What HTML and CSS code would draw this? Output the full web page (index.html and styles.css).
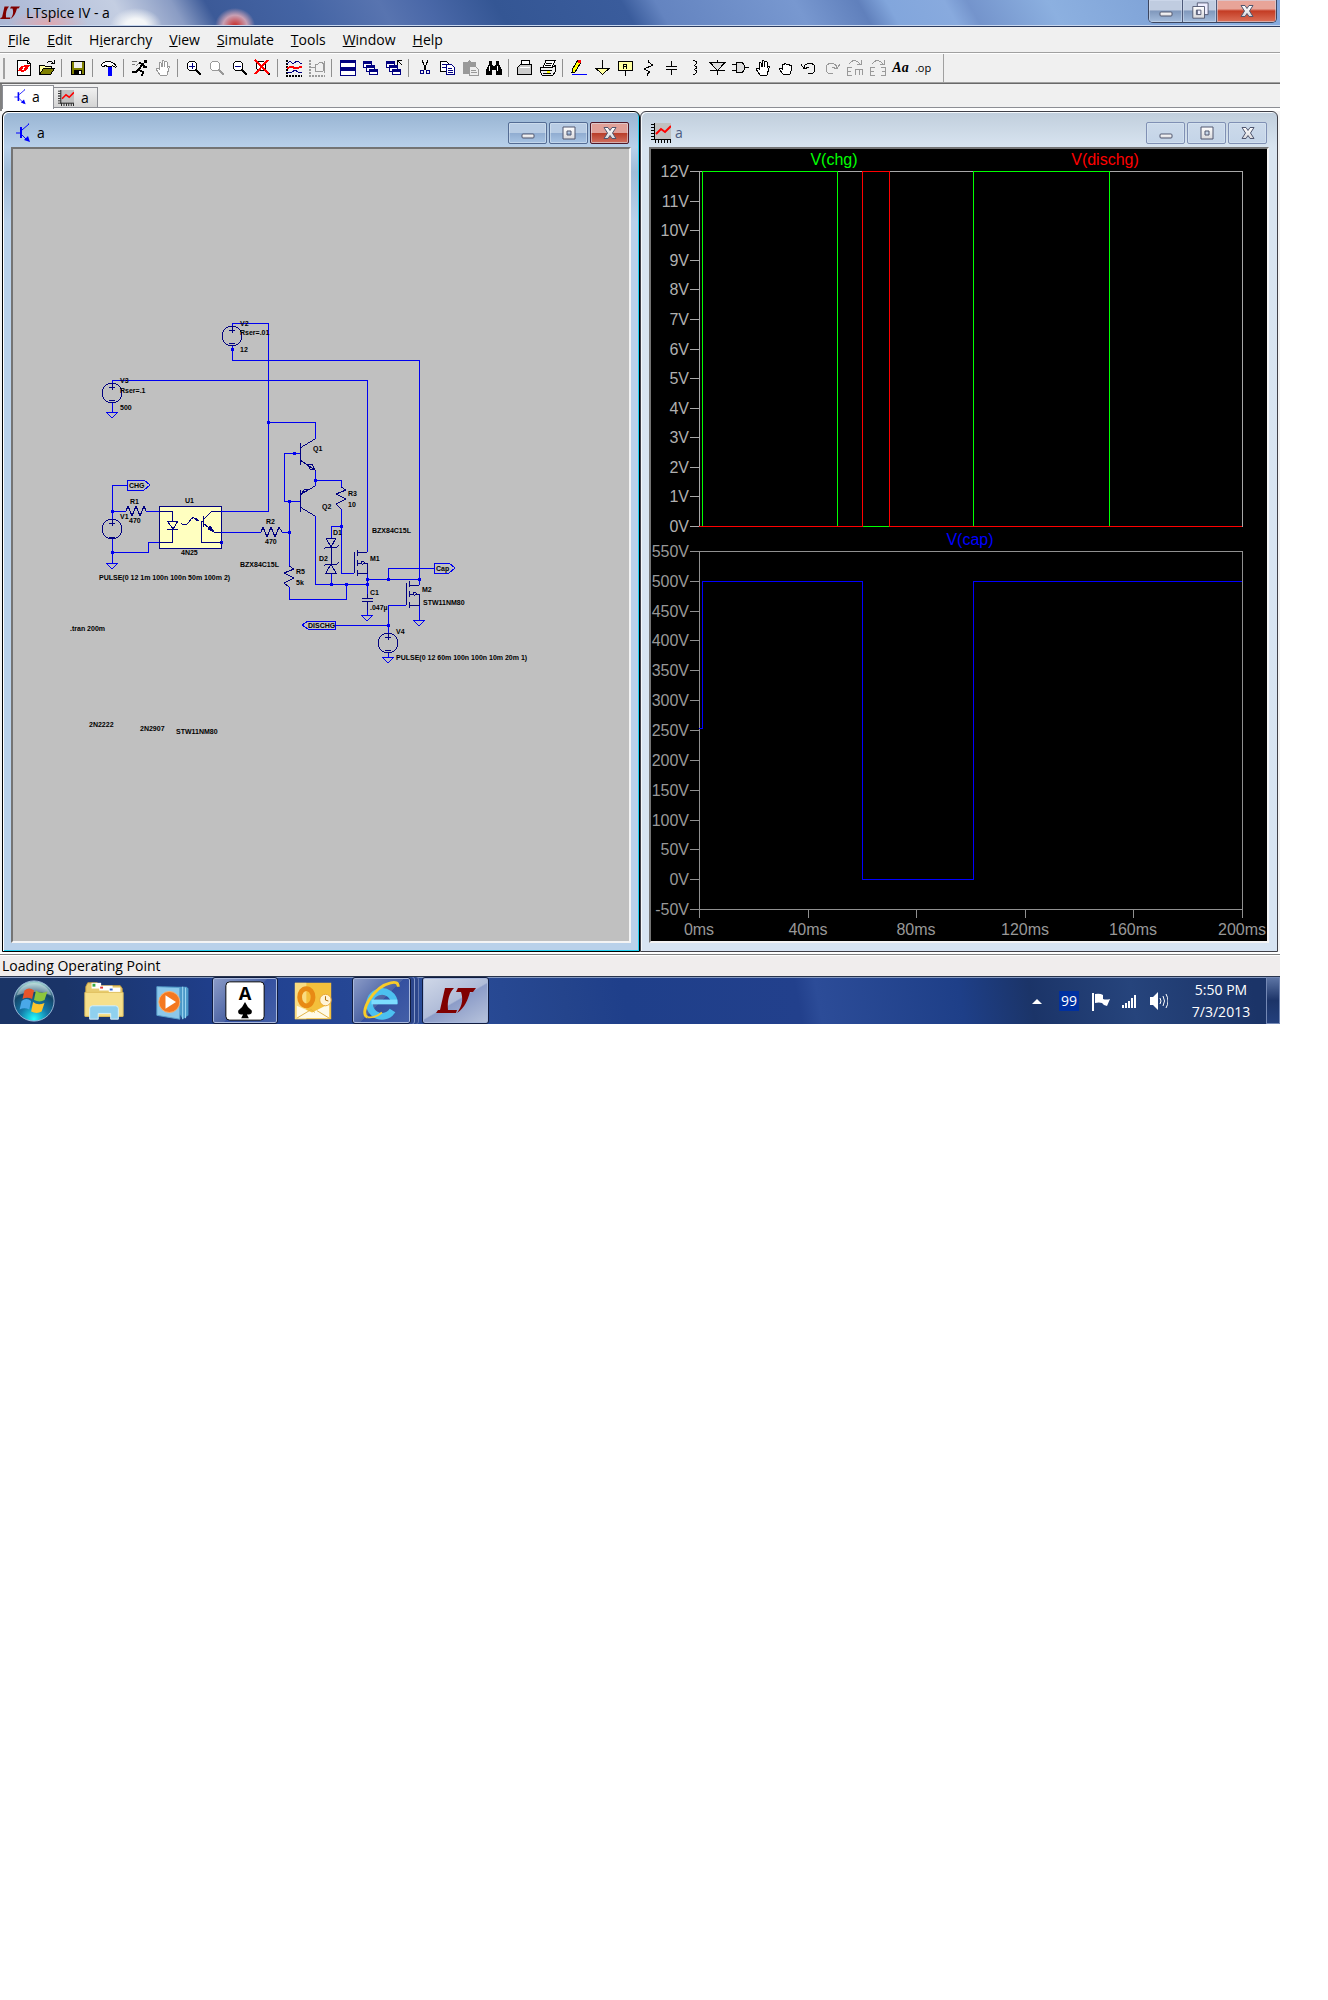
FILE: index.html
```html
<!DOCTYPE html>
<html lang="en">
<head>
<meta charset="utf-8">
<title>LTspice IV - a</title>
<link rel="stylesheet" href="styles.css">
</head>
<body>
<svg class="defs" aria-hidden="true">
  <defs>
    <linearGradient id="glyph" x1="0" y1="0" x2="0" y2="1"><stop offset="0" stop-color="#fff"/><stop offset="1" stop-color="#d8d8dc"/></linearGradient>
    <symbol id="i-min" viewBox="0 0 20 16"><rect x="4" y="9" width="12" height="4" rx="1" fill="url(#glyph)" stroke="#50566e"/></symbol>
    <symbol id="i-max" viewBox="0 0 20 16"><path d="M4 2h12v12h-12zM8 6v4h4v-4z" fill="url(#glyph)" stroke="#50566e" fill-rule="evenodd"/></symbol>
    <symbol id="i-close" viewBox="0 0 20 16"><path d="M4 2.500h4l2 3 2-3h4l-3.500 5.500 3.500 5.500h-4l-2-3-2 3h-4l3.500-5.500z" fill="url(#glyph)" stroke="#50566e"/></symbol>
    <symbol id="i-npn" viewBox="0 0 16 20"><path d="M1 10h5M13 1h1l-7 6M7 12l6 6" stroke="#00f" fill="none"/><path d="M6 4v11" stroke="#00f" stroke-width="2"/><path d="M9 17l4-4 2 6z" fill="#00f"/></symbol>
    <symbol id="i-plot" viewBox="0 0 20 20"><path fill="#c0c0c0" d="M3 0h17v17h-17z"/><path d="M3.500 0v17M3 16.500h17" stroke="#000"/><path d="M1.500 1v16M4 18.500h16" stroke="#000" stroke-width="3" stroke-dasharray="1 2"/><path d="M5 11l5-5 4 3 6-6" fill="none" stroke="#f00" stroke-width="2"/></symbol>
    <symbol id="i-lt" viewBox="0 0 40 28"><path d="M9 1h9C13 6 11 14 12 23h9l-1 3H0l2-3h2zM22 1h18l-3 4h-3C32 12 29 21 21 26c6-8 6-15 4-21h-5z" fill="#800000"/></symbol>
    <symbol id="i-glass" viewBox="0 0 18 18"><circle cx="7" cy="7" r="5" fill="#fff" stroke="currentColor"/><path d="M11 11l5 5" stroke="currentColor" stroke-width="2"/></symbol>
    <symbol id="i-windows" viewBox="0 0 18 18"><g fill="#fff" stroke="#000080"><path d="M1.500 2.500h8v6h-8zM4.500 6.500h8v6h-8zM7.500 10.500h8v5h-8z"/></g><path d="M1 3.500h9M4 7.500h9M7 11.500h9" stroke="#000080" stroke-width="2"/></symbol>
    <symbol id="i-hand" viewBox="0 0 18 18"><path d="M6 16l-4-6q0-2 3 0V4q1-2 2 0l1 4V2q1-1 2 0v6l1-5q1-1 2 0v6l1-2q2 0 1 2l-2 7z" fill="#fff" stroke="currentColor"/></symbol>
    <symbol id="i-turn" viewBox="0 0 18 18"><path d="M4 9c1-7 12-6 11 1 0 4-4 5-7 5M1 5l3 5 5-2" fill="none" stroke="currentColor" stroke-width="1"/></symbol>
  </defs>
</svg>

<div class="screen">
  <header class="titlebar">
    <svg class="app-icon" viewBox="0 0 40 28"><use href="#i-lt"/></svg>
    <h1>LTspice IV - a</h1>
    <div class="app-controls">
      <button class="ctl" aria-label="Minimize"><svg><use href="#i-min"/></svg></button>
      <button class="ctl" aria-label="Restore"><svg viewBox="0 0 20 20"><path d="M7 1h12v13h-12z" fill="#eef" stroke="#50566e"/><path d="M2 5h13v13h-13zM6 9v5h5v-5z" fill="url(#glyph)" fill-rule="evenodd" stroke="#50566e"/></svg></button>
      <button class="ctl ctl-close" aria-label="Close"><svg><use href="#i-close"/></svg></button>
    </div>
  </header>

  <nav class="menu">
    <a href="#"><u>F</u>ile</a><a href="#"><u>E</u>dit</a><a href="#">H<u>i</u>erarchy</a><a href="#"><u>V</u>iew</a><a href="#"><u>S</u>imulate</a><a href="#"><u>T</u>ools</a><a href="#"><u>W</u>indow</a><a href="#"><u>H</u>elp</a>
  </nav>

  <div class="toolbar">
    <button aria-label="New"><svg viewBox="0 0 18 18"><path d="M2.500 1.500h10l3 3v12h-13z" fill="#fff" stroke="#000"/><path d="M12.500 1.500v3h3" fill="none" stroke="#000"/><path d="M3 12l3-5h3l-2 4h2l-1 2zM8 13l2-5H8l1-2h6l-3 5z" fill="#f00"/></svg></button>
    <button aria-label="Open"><svg viewBox="0 0 18 18"><path d="M1.500 15.500v-9h5l1 1h6v3" fill="#ffffa0" stroke="#000"/><path d="M1.500 15.500l4-6h11l-4 6z" fill="#808000" stroke="#000"/><path d="M9 4q3-4 6 0m1-3v3h-3" fill="none" stroke="#000"/></svg></button>
    <i></i>
    <button aria-label="Save"><svg viewBox="0 0 18 18"><path d="M2.500 2.500h13v13h-13z" fill="#808000" stroke="#000"/><path d="M5 3h8v6H5z" fill="#efefef"/><path d="M5 11h8v5H5z"/><path d="M10 12h2v3h-2z" fill="#fff"/></svg></button>
    <i></i>
    <button aria-label="Control Panel"><svg viewBox="0 0 18 18"><path d="M1.500 6.500q1-4 6-4 6 0 9 5l-1 1-3-2-1 1H7l-1-1-3 1z" fill="#fff" stroke="#000"/><path d="M8 8h4v9H8z" fill="#00f"/></svg></button>
    <i></i>
    <button aria-label="Run"><svg viewBox="0 0 18 18"><path d="M13 1h3v3h-3z"/><path d="M8 4l4 1 1 3h3M11 5l-3 6 4 2-1 4M8 10l-3 3H1" fill="none" stroke="#000" stroke-width="2"/><path d="M8 4L5 7M1 2l5 1M1 5h3" fill="none" stroke="#777"/></svg></button>
    <button class="off" aria-label="Halt"><svg><use href="#i-hand"/></svg></button>
    <i></i>
    <button aria-label="Zoom in"><svg viewBox="0 0 18 18"><use href="#i-glass"/><path d="M4 7h6M7 4v6" stroke="#000080" stroke-width="1"/></svg></button>
    <button class="off" aria-label="Pan"><svg><use href="#i-glass"/></svg></button>
    <button aria-label="Zoom out"><svg viewBox="0 0 18 18"><use href="#i-glass"/><path d="M4 7h6" stroke="#000080"/></svg></button>
    <button aria-label="Zoom full"><svg viewBox="0 0 18 18"><use href="#i-glass"/><path d="M1 1l14 14M14 1L1 15" stroke="#f00" stroke-width="2"/></svg></button>
    <i></i>
    <button aria-label="Autorange"><svg viewBox="0 0 18 18"><path d="M1.500 1v16M1 16.500h16" stroke="#000" stroke-dasharray="2 1" stroke-width="2"/><path d="M2 5l3-3 3 3 4-3 5 3M2 13h5l3-2 3 2h4" fill="none" stroke="#000080"/><path d="M2 9l4-1 5 1 6-1" fill="none" stroke="#f00" stroke-width="2"/></svg></button>
    <button class="off" aria-label="Plot settings"><svg viewBox="0 0 18 18"><path d="M1.500 1v16M1 16.500h16" stroke="#999" stroke-dasharray="2 1" stroke-width="2"/><path d="M3 8h4M7 5h3q5-5 6 3 0 7-6 4H7zM16.500 2v12" fill="none" stroke="#999"/></svg></button>
    <i></i>
    <button aria-label="Tile"><svg viewBox="0 0 18 18"><path d="M1.500 1.500h15v7h-15zM1.500 9.500h15v7h-15z" fill="#fff" stroke="#000080"/><path d="M1 3h16M1 11h16" stroke="#000080" stroke-width="2"/></svg></button>
    <button aria-label="Cascade"><svg><use href="#i-windows"/></svg></button>
    <button aria-label="Close all"><svg viewBox="0 0 18 18"><use href="#i-windows"/><path d="M12 1.500h5M12.500 1v5M12 1l5 5" stroke="#000"/></svg></button>
    <i></i>
    <button aria-label="Cut"><svg viewBox="0 0 18 18"><path d="M6 1l4 10M12 1L8 11" stroke="#000"/><circle cx="6" cy="13" r="2" fill="none" stroke="#000080"/><circle cx="12" cy="13" r="2" fill="none" stroke="#000080"/></svg></button>
    <button aria-label="Copy"><svg viewBox="0 0 18 18"><path d="M1.500 2.500h6l3 3v7h-9z" fill="#fff" stroke="#000"/><path d="M7.500 5.500h5l3 3v7h-8z" fill="#fff" stroke="#000080"/><path d="M3 5.500h4M3 8.500h4M9 9.500h4M9 11.500h5M9 13.500h5" stroke="#000080"/></svg></button>
    <button class="off" aria-label="Paste"><svg viewBox="0 0 18 18"><path d="M1 3h4l2-2 3 2h4v12H1z" fill="#999"/><path d="M7.500 7.500h6l3 3v6h-9z" fill="#eee" stroke="#999"/><path d="M9 11.500h5M9 13.500h6" stroke="#999"/></svg></button>
    <button aria-label="Find"><svg viewBox="0 0 18 18"><path d="M4 2h3v3l2 3 2-3V2h3v3l3 6v5h-6v-5H7v5H1v-5l3-6z"/><path d="M4 7v5M12 7v5" stroke="#fff"/></svg></button>
    <i></i>
    <button aria-label="Page setup"><svg viewBox="0 0 18 18"><path d="M5 6l1-4.500h7l1 4.500" fill="#fff" stroke="#000"/><path d="M1.500 15.500v-7l3-3h11v10z" fill="#ccc" stroke="#000"/><path d="M4 8h10" stroke="#fff"/></svg></button>
    <button aria-label="Print"><svg viewBox="0 0 18 18"><path d="M4 8l3-6.500h9l-3 7" fill="#fff" stroke="#000"/><path d="M7 4.500h6M6 6.500h6" stroke="#000"/><path d="M1.500 13.500v-5h11l4-2v6l-3 4h-10z" fill="#eee" stroke="#000"/><path d="M2 11.500h11M4 14.500h8" stroke="#000"/><path d="M8 12h3v2H8z" fill="#ff0"/></svg></button>
    <i></i>
    <button aria-label="Wire"><svg viewBox="0 0 18 18"><path d="M2 13l1-4 5-8h3l-1 4-5 8z" fill="#ff0" stroke="#000"/><path d="M8 1h3v3H8z" fill="#f00"/><path d="M2 15.500h15" stroke="#00f"/></svg></button>
    <button aria-label="Ground"><svg viewBox="0 0 18 18"><path d="M9.500 1v8" stroke="#000"/><path d="M3 9.500h13l-6.500 6z" fill="#ffffa0" stroke="#000"/></svg></button>
    <button aria-label="Label net"><svg viewBox="0 0 18 18"><path d="M2.500 2.500h14v9h-14zM9.500 12v5" fill="#ffffa0" stroke="#000"/><path d="M7.500 10V5.500h3V10M8 7.500h3" fill="none" stroke="#000"/></svg></button>
    <button aria-label="Resistor"><svg viewBox="0 0 18 18"><path d="M9 1v2l5 3-9 4 6 3-3 2v2" fill="none" stroke="#000"/></svg></button>
    <button aria-label="Capacitor"><svg viewBox="0 0 18 18"><path d="M9.500 2v5M4 7.500h11M4 10.500h11M9.500 11v5" stroke="#000"/></svg></button>
    <button aria-label="Inductor"><svg viewBox="0 0 18 18"><path d="M7.500 1.500h2q4 2 0 5h-1 1q4 2 0 4h-1 1q4 2 0 5h-2" fill="none" stroke="#000"/></svg></button>
    <button aria-label="Diode"><svg viewBox="0 0 18 18"><path d="M9.500 1v15M2 11.500h15" stroke="#000"/><path d="M2 3.500h15l-7.500 8z" fill="#ddd" stroke="#000"/></svg></button>
    <button aria-label="Component"><svg viewBox="0 0 18 18"><path d="M1 5.500h4M1 11.500h4M14 8.500h4" stroke="#000"/><path d="M5.500 3.500h4q4 0 4 5t-4 5h-4z" fill="#ddd" stroke="#000"/></svg></button>
    <button aria-label="Move"><svg><use href="#i-hand"/></svg></button>
    <button aria-label="Drag"><svg viewBox="0 0 18 18"><path d="M6 15l-4-5q0-2 3 0V6q1-2 2 0 1-3 3 0 2-2 3 1 2-1 2 2l-2 6z" fill="#fff" stroke="#000"/></svg></button>
    <button aria-label="Undo"><svg><use href="#i-turn"/></svg></button>
    <button class="off" aria-label="Redo"><svg viewBox="0 0 18 18"><path d="M14 9C13 2 2 3 3 10c0 4 4 5 7 5M17 5l-3 5-5-2" fill="none" stroke="#999"/></svg></button>
    <button class="off" aria-label="Rotate"><svg viewBox="0 0 18 18"><path d="M6 8.500H1.500v8H6M2 12.500h3M9.500 16v-5.500h7V16M13 11v5M3 5q5-7 11 0m1-4v4h-4" fill="none" stroke="#999"/></svg></button>
    <button class="off" aria-label="Mirror"><svg viewBox="0 0 18 18"><path d="M6 8.500H1.500v8H6M2 12.500h3M12 8.500h4.500v8H12M16 12.500h-3M3 5q5-7 11 0m1-4v4h-4" fill="none" stroke="#999"/></svg></button>
    <button class="tool-text">Aa</button>
    <button class="tool-op">.op</button>
  </div>

  <div class="tabs">
    <button class="tab tab-on"><svg><use href="#i-npn"/></svg>a</button>
    <button class="tab"><svg><use href="#i-plot"/></svg>a</button>
  </div>

  <main class="mdi">
    <section class="win win-active">
      <header class="win-title">
        <svg><use href="#i-npn"/></svg><h2>a</h2>
        <div class="win-controls">
          <button class="ctl" aria-label="Minimize"><svg><use href="#i-min"/></svg></button>
          <button class="ctl" aria-label="Maximize"><svg><use href="#i-max"/></svg></button>
          <button class="ctl ctl-close" aria-label="Close"><svg><use href="#i-close"/></svg></button>
        </div>
      </header>
      <svg class="canvas schematic" viewBox="13 149 616 792">
        <path class="chip" d="M159 506h62v42h-62z"/>
        <g class="wire">
          <path d="M232 326v-3h36v188h-47M232 346v14h187v219M112 383v-3h255v172M112 403v9M268 422h47v17M284 453h10M294 453h-10v48h16M315 470v10h26v7M289 501v65M221 532h40M282 532h7M112 519v-34h15M112 511h14M146 511h13M112 539v24M112 552h36v-10h11M315 516v68h52M341 509v64h13M341 526h-10v12M331 573v11M289 587v12h57v-15M367 573v21M367 579h52v6M388 579v-11h46M388 633v-28h18M335 625h53M367 610v5M419 606v14M388 653v4M315 480v6M294 453h6"/>
          <path d="M106 412h12l-6 6zM106 563h12l-6 6zM361 615h12l-6 6zM413 620h12l-6 6zM382 657h12l-6 6z"/>
          <path d="M127 480h17l6 5-6 5h-17zM434 563h15l6 5-6 5h-15zM335 621h-27l-6 4 6 4h27z"/>
          <path d="M220 541h2v2h-2z"/>
        </g>
        <g class="dot"><path d="M231 348h3v3h-3zM267 421h3v3h-3zM293 452h3v3h-3zM314 479h3v3h-3zM288 500h3v3h-3zM288 531h3v3h-3zM340 525h3v3h-3zM330 583h3v3h-3zM345 583h3v3h-3zM366 583h3v3h-3zM366 578h3v3h-3zM387 578h3v3h-3zM418 578h3v3h-3zM387 624h3v3h-3zM111 510h3v3h-3zM111 551h3v3h-3z"/></g>
        <g class="part">
          <circle cx="232" cy="336" r="10"/><circle cx="112" cy="393" r="10"/><circle cx="112" cy="529" r="10"/><circle cx="388" cy="643" r="10"/>
          <path d="M229 330h6M232 327v6M229 343h6M109 387h6M112 384v6M109 400h6M109 523h6M112 520v6M109 537h6M385 637h6M388 634v6M385 650h6"/>
          <path d="M126 511l2-5 4 10 4-10 4 10 4-10 2 5M261 532l2-5 4 10 4-10 4 10 4-10 3 5"/>
          <path d="M341 487l5 3-10 4 10 5-10 5 5 5M289 566l5 3-10 4 10 5-10 5 5 4"/>
          <path d="M300 443v22M300 448l15-9M300 460l15 10M307 464l5 0 3 6-5-1zM300 490v22M315 486l-15 9M301 494l4-5 3 1zM300 507l15 9"/>
          <path d="M159 511h13v10M167 521h11l-5 8zM167 529h11M172 529v13h-13M181 523c2 3 6 2 8-1s4-6 6-3 3 1 4 1M195 518l4 3"/>
          <path d="M203 516v11M203 520l9-9h9M203 523l11 9h7M208 529l2-3 4 6zM203 521h-2v21h20"/>
          <path d="M326 538h10l-5 9zM324 549l2-2h11l2-2M331 547v17M324 566l2-2h11l2-2M331 564l5 9h-10z"/>
          <path d="M354 552v21M357 550v6M357 560v6M357 570v6M357 552h10M357 563h4q1-3 4 0-3 2-4 0M365 563h2v10h-10M406 583v22M409 581v6M409 591v6M409 602v6M409 585h10M409 594h4q1-3 4 0-3 2-4 0M417 594h2v12M419 605h-10"/>
          <path d="M367 594v4M362 598h11M362 601h11M367 601v9"/>
        </g>
        <g class="note">
          <text x="240" y="326">V2</text><text x="240" y="335">Rser=.01</text><text x="240" y="352">12</text>
          <text x="120" y="383">V3</text><text x="120" y="393">Rser=.1</text><text x="120" y="410">500</text>
          <text x="313" y="451">Q1</text><text x="322" y="509">Q2</text><text x="348" y="496">R3</text><text x="348" y="507">10</text>
          <text x="129" y="488">CHG</text><text x="130" y="504">R1</text><text x="129" y="523">470</text><text x="120" y="519">V1</text>
          <text x="185" y="503">U1</text><text x="181" y="555">4N25</text><text x="266" y="524">R2</text><text x="265" y="544">470</text>
          <text x="240" y="567">BZX84C15L</text><text x="296" y="574">R5</text><text x="296" y="585">5k</text>
          <text x="333" y="535">D1</text><text x="319" y="561">D2</text><text x="372" y="533">BZX84C15L</text><text x="370" y="561">M1</text>
          <text x="436" y="571">Cap</text><text x="422" y="592">M2</text><text x="423" y="605">STW11NM80</text>
          <text x="370" y="595">C1</text><text x="370" y="610">.047µ</text><text x="308" y="628">DISCHG</text><text x="396" y="634">V4</text>
          <text x="396" y="660">PULSE(0 12 60m 100n 100n 10m 20m 1)</text>
          <text x="99" y="580">PULSE(0 12 1m 100n 100n 50m 100m 2)</text>
          <text x="70" y="631">.tran 200m</text><text x="89" y="727">2N2222</text><text x="140" y="731">2N2907</text><text x="176" y="734">STW11NM80</text>
        </g>
      </svg>
    </section>

    <section class="win">
      <header class="win-title">
        <svg><use href="#i-plot"/></svg><h2>a</h2>
        <div class="win-controls">
          <button class="ctl" aria-label="Minimize"><svg><use href="#i-min"/></svg></button>
          <button class="ctl" aria-label="Maximize"><svg><use href="#i-max"/></svg></button>
          <button class="ctl" aria-label="Close"><svg><use href="#i-close"/></svg></button>
        </div>
      </header>
      <svg class="canvas plot" viewBox="651 149 616 792">
        <g class="axis axis-a">
          <path d="M699 171h543v355h-543zM690 171h9M690 201h9M690 230h9M690 260h9M690 289h9M690 319h9M690 349h9M690 378h9M690 408h9M690 437h9M690 467h9M690 496h9M690 526h9"/>
          <g class="ylab"><text x="689" y="177">12V</text><text x="689" y="207">11V</text><text x="689" y="236">10V</text><text x="689" y="266">9V</text><text x="689" y="295">8V</text><text x="689" y="325">7V</text><text x="689" y="355">6V</text><text x="689" y="384">5V</text><text x="689" y="414">4V</text><text x="689" y="443">3V</text><text x="689" y="473">2V</text><text x="689" y="502">1V</text><text x="689" y="532">0V</text></g>
        </g>
        <g class="axis axis-b">
          <path d="M699 551h543v358h-543zM690 551h9M690 581h9M690 611h9M690 640h9M690 670h9M690 700h9M690 730h9M690 760h9M690 790h9M690 820h9M690 849h9M690 879h9M690 909h9M699 909v9M808 909v9M916 909v9M1025 909v9M1133 909v9M1242 909v9"/>
          <g class="ylab"><text x="689" y="557">550V</text><text x="689" y="587">500V</text><text x="689" y="617">450V</text><text x="689" y="646">400V</text><text x="689" y="676">350V</text><text x="689" y="706">300V</text><text x="689" y="736">250V</text><text x="689" y="766">200V</text><text x="689" y="796">150V</text><text x="689" y="826">100V</text><text x="689" y="855">50V</text><text x="689" y="885">0V</text><text x="689" y="915">-50V</text></g>
          <g class="xlab"><text x="699" y="935">0ms</text><text x="808" y="935">40ms</text><text x="916" y="935">80ms</text><text x="1025" y="935">120ms</text><text x="1133" y="935">160ms</text><text x="1242" y="935">200ms</text></g>
        </g>
        <path class="trace chg" d="M699 526h3v-355h135v355h136v-355h136v355h133"/>
        <path class="trace dischg" d="M699 526h163v-355h27v355h353"/>
        <path class="trace chg" d="M863 526h26"/>
        <path class="trace cap" d="M699 728h3v-147h160v298h111v-298h269"/>
        <g class="xlab"><text class="t-chg" x="834" y="165">V(chg)</text><text class="t-dischg" x="1105" y="165">V(dischg)</text><text class="t-cap" x="970" y="545">V(cap)</text></g>
      </svg>
    </section>
  </main>

  <footer class="status">Loading Operating Point</footer>

  <div class="taskbar">
    <button class="task start" aria-label="Start"><svg viewBox="0 0 46 46">
      <defs><radialGradient id="orb" cx=".5" cy=".95" r=".9"><stop offset="0" stop-color="#2ff"/><stop offset=".4" stop-color="#1478a8"/><stop offset=".75" stop-color="#134468"/><stop offset="1" stop-color="#9cc"/></radialGradient></defs>
      <circle cx="23" cy="23" r="21" fill="url(#orb)" stroke="#9ab8d8"/><path d="M5 17a19 19 0 0 1 36 0q-17-7-36 0z" fill="#fff" opacity=".35"/>
      <path d="M13 12q5-4 10 0l-2 9q-5-3-10 0z" fill="#e8542a"/><path d="M25 12q5 4 12 1l-3 9q-5 3-11 0z" fill="#8cc63c"/><path d="M10 23q5-4 10 0l-2 9q-5-3-10 0z" fill="#4aa8e8"/><path d="M22 24q5 4 12 1l-3 9q-5 3-11 0z" fill="#fcc42c"/></svg></button>
    <button class="task plain" aria-label="Explorer"><svg viewBox="0 0 46 46"><path d="M4 8l2-4h10l2 3h22l2 3v29H4z" fill="#e8cc70" stroke="#c8a040"/><path d="M10 4h10v6H10z" fill="#fff"/><path d="M11 5h3v3h-3z" fill="#3a4"/><path d="M18 7h14v5H18z" fill="#fff"/><path d="M19 8h3v2h-3z" fill="#d33"/><path d="M28 9h12v5H28z" fill="#fff"/><path d="M29 10h3v2h-3z" fill="#36c"/><path d="M3 14h40v25H3z" fill="#f6e08c" stroke="#e0c060"/><path d="M8 42V31q0-3 3-3h24q3 0 3 3v11h-8v-6H17v6z" fill="#8fd0ee" stroke="#d8f0fa"/></svg></button>
    <button class="task plain" aria-label="Media Player"><svg viewBox="0 0 46 46"><path d="M10 8h24l2 2v28l-6 4z" fill="#4a98c8"/><path d="M33 9v32M30 8v34" stroke="#a8dcf4"/><path d="M3 8l24 1v33L3 38z" fill="#8cc8ea" stroke="#58a0cc"/><circle cx="16" cy="24" r="11" fill="#f47820" stroke="#f8b070"/><path d="M12 17l11 7-11 7z" fill="#fff"/></svg></button>
    <button class="task lit" aria-label="Solitaire"><svg viewBox="0 0 46 46"><rect x="3" y="3" width="40" height="40" rx="4" fill="#fff" stroke="#000" stroke-width="1"/><text class="ace" x="23" y="22">A</text><path d="M23 24q2 5 7 9 1 5-5 4l2 4h-8l2-4q-6 1-5-4 5-4 7-9z"/></svg></button>
    <button class="task plain" aria-label="Outlook"><svg viewBox="0 0 46 46"><path d="M3 4h38v38H3z" fill="#f4c03c"/><path d="M3 4h12v38H3z" fill="#fadc80"/><path d="M5 41V28l16 7 18-9v15z" fill="#fffbe8"/><path d="M5 41l15-9 4 3M39 41l-13-8" stroke="#e0b040" fill="none"/><ellipse cx="15" cy="19" rx="7" ry="9" fill="none" stroke="#e88a14" stroke-width="5"/><circle cx="35" cy="22" r="6" fill="#fff4d8" stroke="#e8a838"/><path d="M35 18v4l3 1" stroke="#a60" fill="none"/></svg></button>
    <button class="task lit stack" aria-label="Internet Explorer"><svg viewBox="0 0 46 46"><path d="M36 26a13 13 0 1 0-2 7" fill="none" stroke="#4cc0f0" stroke-width="7"/><path d="M12 24h27" stroke="#7cdcff" stroke-width="5"/><path d="M8 40C-2 36 14 8 32 4q8-2 8 4" fill="none" stroke="#f8cc28" stroke-width="3"/><path d="M8 40q8 1 15-5" fill="none" stroke="#f8cc28" stroke-width="2"/></svg></button>
    <button class="task bright" aria-label="LTspice"><svg viewBox="0 0 40 28"><use href="#i-lt"/></svg></button>
    <div class="tray">
      <svg viewBox="0 0 18 24"><path d="M4 15l5-5 5 5z" fill="#fff"/></svg>
      <span class="temp">99</span>
      <svg viewBox="0 0 20 24"><path d="M3 4v18" stroke="#fff" stroke-width="2"/><path d="M5 5q5-1 8 1v4q3 1 7 0l-3 7q-3 0-5-3-3-1-7 0z" fill="#fff"/></svg>
      <svg viewBox="0 0 20 24"><path d="M4 19v-3M7 19v-5M10 19v-7M13 19V9M16 19V6" stroke="#fff" stroke-width="2"/></svg>
      <svg viewBox="0 0 20 24"><path d="M2 8h3l5-5v18l-5-5H2z" fill="#fff"/><path d="M12 9q2 3 0 6M15 7q3 5 0 10M18 5q4 7 0 14" fill="none" stroke="#fff"/></svg>
      <div class="clock"><div>5:50 PM</div><div>7/3/2013</div></div>
      <button class="peek" aria-label="Show desktop"></button>
    </div>
  </div>
</div>
</body>
</html>
```
FILE: styles.css
```css
* { box-sizing: border-box; }
body { margin: 0; background: #fff; color: #000; font: 14px/20px "Open Sans", "Noto Sans", sans-serif; }
button { margin: 0; padding: 0; border: 0; background: none; font: inherit; color: inherit; }
h1, h2 { margin: 0; font-size: 14px; font-weight: 400; }
.defs { position: absolute; width: 0; height: 0; }
.screen { width: 100%; max-width: 1280px; background: #f0f0f0; }

.titlebar {
  display: flex; align-items: flex-start; height: 27px; padding-right: 3px; overflow: hidden;
  border-bottom: 1px solid #2c3c60;
  background:
    linear-gradient(to bottom, transparent 25px, #c8d8f0 25px),
    radial-gradient(ellipse 26px 18px at 136px 26px, #f4f6f8 40%, transparent),
    radial-gradient(ellipse 20px 18px at 235px 26px, #c83c3c 10%, #c8a0b4 60%, transparent),
    radial-gradient(ellipse 40px 14px at 48px 24px, #e0a8b0, transparent),
    linear-gradient(60deg, #aab6d4 0, #c4cee2 110px, #8a9cc4 160px, #3c5a98 190px, #4464a4 270px, #5874b0 340px, #4a68a8 380px, #345694 440px, #3a5c9c 550px, #6484c0 580px, #7898d0 700px, #6080bc 755px, #82a6dc 780px, #88aade 830px, #7494cc 850px, #8cb0e0 920px, #80a4d8 1010px, #90b4e4 1060px, #84a8dc 100%);
}
.app-icon { width: 20px; height: 14px; margin-top: 6px; }
.titlebar h1 { margin: 3px auto 0 6px; }
.app-controls { display: flex; height: 23px; border: 1px solid #3c4660; border-top: 0; border-radius: 0 0 5px 5px; overflow: hidden; }
.ctl { display: flex; align-items: center; justify-content: center; }
.ctl svg { width: 20px; height: 16px; }
.app-controls .ctl { width: 34px; border-right: 1px solid #4c5878; background: linear-gradient(#c0cce0 0 45%, #8098bc 50%, #a4bcdc); box-shadow: inset 0 0 0 1px #d4e0f088; }
.app-controls .ctl:nth-child(2) svg { height: 18px; }
.app-controls .ctl-close { width: 59px; border: 0; background: linear-gradient(#e8a498 0 40%, #c43c24 50%, #dc7058); }

.menu { display: flex; gap: 17px; height: 27px; padding: 3px 8px; border-bottom: 1px solid #fff; box-shadow: inset 0 -1px #a0a0a0; }
.menu a { color: #000; text-decoration: none; }

.toolbar { display: flex; align-items: center; height: 30px; padding: 0 0 2px 12px; border-bottom: 1px solid #696969; box-shadow: inset 0 -1px #a0a0a0; position: relative; }
.toolbar::before { content: ""; position: absolute; left: 3px; top: 4px; width: 2px; height: 21px; background: #a0a0a0; }
.toolbar button { display: flex; align-items: center; justify-content: center; flex: none; width: 23px; height: 22px; color: #000; }
.toolbar .off { color: #999; }
.toolbar svg { width: 18px; height: 18px; shape-rendering: crispEdges; }
.toolbar i { flex: none; width: 8px; height: 18px; background: linear-gradient(90deg, transparent 3px, #909090 3px 4px, transparent 4px); }
.toolbar .tool-text { font: italic bold 14px "Liberation Serif", serif; }
.toolbar .tool-op { width: 32px; padding-right: 9px; font-size: 11px; height: 28px; border-right: 1px solid #a0a0a0; }

.tabs { display: flex; align-items: flex-end; height: 27px; padding-right: 2px; border-left: 2px solid #808080; background: linear-gradient(#f0f0f0 23px, #8c8e94 23px 24px, #fff 24px); }
.tab { display: flex; align-items: center; gap: 7px; width: 44px; height: 21px; margin-bottom: 3px; padding-left: 4px; border: 1px solid #8c8e94; border-left: 0; background: linear-gradient(#f0f0f0, #d4d4d4); }
.tab svg { width: 16px; height: 16px; }
.tab-on { width: 52px; height: 24px; margin-bottom: 2px; padding: 0 0 2px 9px; border-left: 1px solid #8c8e94; border-bottom: 0; background: #fff; gap: 4px; }

.mdi { display: grid; grid-template-columns: 1fr 1fr; padding: 0 2px; background: #f4f4f4; }
.win { padding: 0 8px 8px; border: 1px solid #404048; border-radius: 6px 6px 0 0; background: linear-gradient(#c0cedc, #d8e4f0 35px, #d7e4f2); box-shadow: inset 1px 1px #f4f8fc; }
.win-active { border-color: #000; background: linear-gradient(#98b4d2, #b8d0ea 35px, #a0bcd8 60px, #b9d1ea 110px); box-shadow: inset 1px 1px #fff, inset -1px -1px #20d0f0; }
.win-title { display: flex; align-items: center; height: 35px; padding: 6px 0 0 2px; gap: 4px; }
.win-title > svg { width: 20px; height: 20px; }
.win:not(.win-active) .win-title h2 { color: #4c5c80; }
.win-controls { display: flex; gap: 2px; margin-left: auto; padding-right: 2px; }
.win-controls .ctl { width: 39px; height: 22px; border: 1px solid #8090b4; border-radius: 2px; background: linear-gradient(#ccdaea, #c4d4e8); box-shadow: inset 0 0 0 1px #dce8f488; }
.win-active .ctl { border-color: #546c94; background: linear-gradient(#b8cce4 0 48%, #90acd0 50%, #a8c4e4); }
.win-active .ctl-close { border-color: #501828; background: linear-gradient(#e0a098 0 48%, #b83c28 50%, #d07060); }
.canvas { display: block; width: 100%; height: auto; border: 2px solid; border-color: #747474 #f4f4f4 #f4f4f4 #747474; shape-rendering: crispEdges; }

.schematic { background: #c0c0c0; }
.chip { fill: #ffffc0; stroke: #000080; stroke-width: 1px; }
.wire { fill: none; stroke: #0000f0; }
.dot { fill: #0000f0; }
.part { fill: none; stroke: #000080; }
.note { font: bold 7px "Liberation Sans", Arial, sans-serif; fill: #000; }

.plot { background: #000; font: 16px "Liberation Sans", Arial, sans-serif; }
.axis path, .trace { fill: none; stroke-width: 1px; }
.axis-a path { stroke: #a8a8a8; }
.axis-a { fill: #b0b0b0; }
.axis-b path { stroke: #909090; }
.axis-b { fill: #989898; }
.ylab { text-anchor: end; }
.xlab { text-anchor: middle; }
.chg { stroke: #00ff00; }
.dischg { stroke: #ff0000; }
.cap { stroke: #0000ff; }
.t-chg { fill: #00ff00; }
.t-dischg { fill: #ff0000; }
.t-cap { fill: #0000ff; }

.status { height: 24px; padding: 4px 2px 0; background: linear-gradient(#fff 2px, #808080 2px 3px, #fff 3px 4px, #f0eded 4px); }

.taskbar {
  display: flex; align-items: stretch; height: 48px; border-top: 1px solid #28344c; box-shadow: inset 0 1px #8498c0;
  background: linear-gradient(80deg, #1a3466 0, #1a3468 70px, #204090 240px, #2a4c98 440px, #24448c 560px, #1f3f8a 620px, #22408c 790px, #2c4c98 810px, #1e3f88 950px, #1b3468 1020px, #26447c 1120px, #1b3468 1240px);
}
.task { display: flex; align-items: center; justify-content: center; flex: none; width: 66px; }
.task svg { width: 44px; height: 44px; }
.plain { width: 72px; }
.start { width: 68px; }
.lit, .bright { border: 1px solid #101c40; border-radius: 3px; box-shadow: inset 0 0 0 1px #a8b8dc; background: linear-gradient(135deg, #8c9cc8, #4c64a4 50%, #3450a0 51%, #4460a8); }
.bright { width: 67px; background: linear-gradient(150deg, #d0d8e8, #b0bcd8 50%, #8c9cc8 52%, #b8c4dc); }
.bright svg { width: 40px; height: 28px; }
.stack { width: 59px; margin: 0 11px 0 2px; box-shadow: inset 0 0 0 1px #a8b8dc, 3px 0 #2c468c, 4px 0 #8498c8, 7px 0 #2c468c, 8px 0 #6478b0; }
.ace { font: bold 22px "Liberation Mono", monospace; text-anchor: middle; }
.tray { display: flex; align-items: center; margin-left: auto; color: #fff; gap: 9px; }
.tray svg { width: 20px; height: 24px; }
.temp { width: 20px; margin: 0 2px 0 3px; background: #0030a0; text-align: center; }
.clock { width: 72px; margin-left: 8px; text-align: center; line-height: 22px; }
.peek { align-self: stretch; width: 14px; border: 1px solid #7488b4; background: linear-gradient(#5c74a4, #1c3468 50%, #24407c); }
```
